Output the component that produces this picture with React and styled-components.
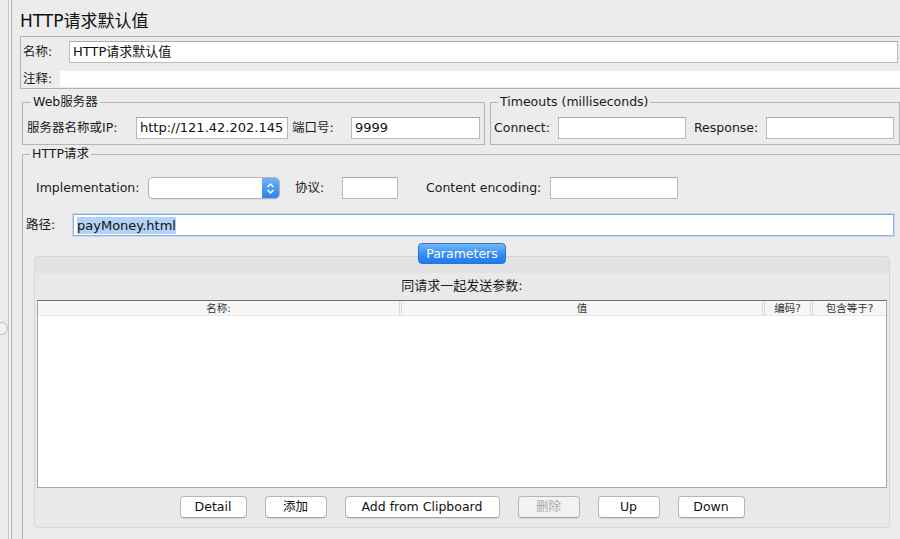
import React from "react";
import styled, { createGlobalStyle } from "styled-components";

const GlobalStyle = createGlobalStyle`
  html, body {
    margin: 0;
    padding: 0;
    background: #ececec;
  }
  body {
    font-family: "DejaVu Sans", "Noto Sans CJK SC", sans-serif;
    font-size: 12.5px;
    line-height: 16px;
    color: #111;
  }
`;

const Page = styled.div`
  display: flex;
  width: 900px;
  height: 539px;
  overflow: hidden;
  background: #ececec;
  position: relative;
`;

const SplitBar = styled.div`
  flex: 0 0 13px;
  position: relative;
  background: linear-gradient(
    to right,
    transparent 8px,
    #c6c6c6 8px 9px,
    #f3f3f3 9px 11px,
    #b4b4b4 11px 12px,
    transparent 12px
  );
`;

const Grip = styled.span`
  position: absolute;
  left: -5px;
  top: 322px;
  width: 11px;
  height: 11px;
  border-radius: 50%;
  border: 1px solid #b8b8b8;
  background: #f2f2f2;
`;

const Main = styled.div`
  flex: 1;
  min-width: 0;
  display: flex;
  flex-direction: column;
  padding-left: 7px;
`;

const Title = styled.div`
  height: 36px;
  padding-top: 9px;
  box-sizing: border-box;
  font-size: 17px;
  line-height: 24px;
  color: #111;
`;

const NameBox = styled.div`
  display: flex;
  flex-direction: column;
  gap: 8px;
  border: 1px solid #b2b2b2;
  margin-right: -3px;
  padding: 4px 4px 1px 2px;
`;

const Row = styled.div`
  display: flex;
  align-items: center;
  padding-left: ${(p) => p.$indent || 0}px;
  margin-top: ${(p) => p.$top || 0}px;
`;

const Label = styled.span`
  flex: 0 0 ${(p) => p.$w}px;
  white-space: nowrap;
  font-size: 12.5px;
  line-height: 16px;
  color: #1a1a1a;
`;

const Field = styled.div`
  box-sizing: border-box;
  height: 22px;
  ${(p) => (p.$w ? `flex: 0 0 ${p.$w}px;` : "flex: 1;")}
  margin-right: ${(p) => p.$mr || 0}px;
  background: #fff;
  border: 1px solid ${(p) => (p.$focus ? "#8fb2e3" : "#b9b9b9")};
  border-top-color: ${(p) => (p.$focus ? "#7ea5dc" : "#a9a9a9")};
  box-shadow: ${(p) => (p.$focus ? "0 0 0 1px #c5d8f2" : "none")};
  padding-left: 3px;
  display: flex;
  align-items: center;
  font-size: 13px;
  line-height: 16px;
  white-space: nowrap;
  overflow: hidden;
`;

const PlainField = styled.div`
  flex: 1;
  height: 16px;
  margin-right: -4px;
  background: #fff;
`;

const Selected = styled.span`
  background: #b2d2f6;
  line-height: 17px;
`;

const GroupRow = styled.div`
  display: flex;
  gap: 5px;
  margin: 5px 0 0 2px;
`;

const Group = styled.fieldset`
  margin: 0;
  min-width: 0;
  border: 1px solid #b4b4b4;
  padding: ${(p) => p.$pad};
  ${(p) => (p.$w ? `flex: 0 0 ${p.$w}px;` : "flex: 1;")}
  box-sizing: border-box;
  display: flex;
  flex-direction: column;
`;

const Legend = styled.legend`
  padding: 0 2px;
  margin-left: 4px;
  font-size: 12.5px;
  line-height: 16px;
  height: 16px;
  color: #1a1a1a;
`;

const HttpGroup = styled(Group)`
  margin: 1px -3px -8px 2px;
  flex: 1;
`;

const Select = styled.div`
  box-sizing: border-box;
  flex: 0 0 132px;
  height: 22px;
  border: 1px solid #b3b3b3;
  border-radius: 5px;
  background: #fff;
  display: flex;
  justify-content: flex-end;
  overflow: hidden;
  box-shadow: 0 1px 0 rgba(0, 0, 0, 0.06);
`;

const SelectArrow = styled.div`
  width: 17px;
  height: 100%;
  background: linear-gradient(#6fb1f7, #2a84ee);
  display: flex;
  align-items: center;
  justify-content: center;
`;

const TabBar = styled.div`
  display: flex;
  justify-content: center;
  margin-top: 7px;
  padding-right: 4px;
  position: relative;
  z-index: 1;
`;

const Tab = styled.div`
  box-sizing: border-box;
  width: 88px;
  height: 21px;
  border-radius: 4px;
  border: 1px solid #2f72d4;
  background: linear-gradient(#74b6fa, #2f8af3 60%, #1f7cf0);
  color: #fff;
  font-size: 12.5px;
  display: flex;
  align-items: center;
  justify-content: center;
`;

const Panel = styled.div`
  margin: -8px 12px 0 8px;
  height: 272px;
  box-sizing: border-box;
  border: 1px solid #d6d6d6;
  border-radius: 4px;
  background: #e9e9e9;
  display: flex;
  flex-direction: column;
  overflow: hidden;
`;

const PanelTop = styled.div`
  height: 16px;
  background: #e2e2e2;
`;

const PanelCaption = styled.div`
  height: 27px;
  display: flex;
  align-items: center;
  justify-content: center;
  padding-bottom: 1px;
  box-sizing: border-box;
  font-size: 13px;
  color: #1a1a1a;
`;

const Table = styled.div`
  margin: 0 2px 0 2px;
  height: 188px;
  box-sizing: border-box;
  border: 1px solid #a8a8a8;
  border-top-color: #707070;
  background: #fff;
  display: flex;
  flex-direction: column;
`;

const HeaderRow = styled.div`
  display: flex;
  height: 14px;
  background: #f6f6f6;
  border-bottom: 1px solid #e6e6e6;
`;

const HeaderCell = styled.div`
  ${(p) => (p.$w ? `flex: 0 0 ${p.$w}px;` : "flex: 1;")}
  font-size: 10.5px;
  line-height: 14px;
  color: #333;
  text-align: center;
  border-right: ${(p) => (p.$last ? "none" : "3px double #d8d8d8")};
  box-sizing: border-box;
`;

const ButtonRow = styled.div`
  flex: 1;
  display: flex;
  justify-content: center;
  align-items: center;
  gap: 18px;
  padding-bottom: 1px;
`;

const Button = styled.div`
  box-sizing: border-box;
  width: ${(p) => p.$w}px;
  height: 22px;
  border: 1px solid #b6b6b6;
  border-bottom-color: #a2a2a2;
  border-radius: 4px;
  background: ${(p) => (p.$disabled ? "#f2f2f2" : "#fff")};
  color: ${(p) => (p.$disabled ? "#a8a8a8" : "#111")};
  font-size: 12.5px;
  display: flex;
  align-items: center;
  justify-content: center;
  box-shadow: 0 1px 0 rgba(0, 0, 0, 0.05);
`;

const ArrowIcon = () => (
  <svg width="9" height="13" viewBox="0 0 9 13">
    <path d="M1.5 5 L4.5 2 L7.5 5" fill="none" stroke="#fff" strokeWidth="1.5" />
    <path d="M1.5 8 L4.5 11 L7.5 8" fill="none" stroke="#fff" strokeWidth="1.5" />
  </svg>
);

export default function App() {
  return (
    <Page>
      <GlobalStyle />
      <SplitBar>
        <Grip />
      </SplitBar>
      <Main>
        <Title>HTTP请求默认值</Title>

        <NameBox>
          <Row>
            <Label $w={46}>名称:</Label>
            <Field>HTTP请求默认值</Field>
          </Row>
          <Row>
            <Label $w={37}>注释:</Label>
            <PlainField />
          </Row>
        </NameBox>

        <GroupRow>
          <Group $w={463} $pad="7px 4px 5px 4px">
            <Legend>Web服务器</Legend>
            <Row>
              <Label $w={109}>服务器名称或IP:</Label>
              <Field $w={152} $mr={4}>http://121.42.202.145</Field>
              <Label $w={59}>端口号:</Label>
              <Field $w={129}>9999</Field>
            </Row>
          </Group>
          <Group $pad="7px 3px 5px 3px">
            <Legend>Timeouts (milliseconds)</Legend>
            <Row>
              <Label $w={64}>Connect:</Label>
              <Field $w={128} $mr={8}>{""}</Field>
              <Label $w={72}>Response:</Label>
              <Field $w={128}>{""}</Field>
            </Row>
          </Group>
        </GroupRow>

        <HttpGroup $pad="15px 0 0 3px">
          <Legend>HTTP请求</Legend>
          <Row $indent={10}>
            <Label $w={112}>Implementation:</Label>
            <Select>
              <SelectArrow>
                <ArrowIcon />
              </SelectArrow>
            </Select>
            <Label $w={15} />
            <Label $w={47}>协议:</Label>
            <Field $w={56}>{""}</Field>
            <Label $w={28} />
            <Label $w={124}>Content encoding:</Label>
            <Field $w={128}>{""}</Field>
          </Row>
          <Row $top={15}>
            <Label $w={47}>路径:</Label>
            <Field $focus $mr={8}>
              <Selected>payMoney.html</Selected>
            </Field>
          </Row>

          <TabBar>
            <Tab>Parameters</Tab>
          </TabBar>
          <Panel>
            <PanelTop />
            <PanelCaption>同请求一起发送参数:</PanelCaption>
            <Table>
              <HeaderRow>
                <HeaderCell $w={364}>名称:</HeaderCell>
                <HeaderCell $w={363}>值</HeaderCell>
                <HeaderCell $w={48}>编码?</HeaderCell>
                <HeaderCell $last>包含等于?</HeaderCell>
              </HeaderRow>
            </Table>
            <ButtonRow>
              <Button $w={67}>Detail</Button>
              <Button $w={62}>添加</Button>
              <Button $w={155}>Add from Clipboard</Button>
              <Button $w={62} $disabled>删除</Button>
              <Button $w={62}>Up</Button>
              <Button $w={67}>Down</Button>
            </ButtonRow>
          </Panel>
        </HttpGroup>
      </Main>
    </Page>
  );
}
